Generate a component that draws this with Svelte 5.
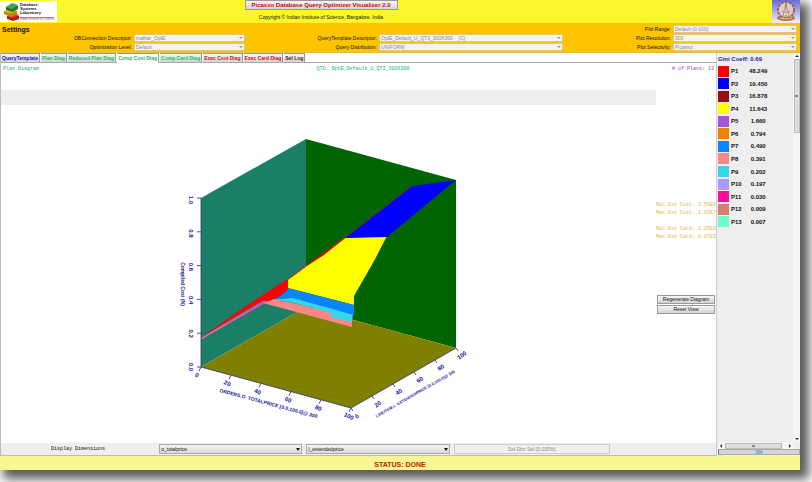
<script lang="ts">
	let activeTab = "Comp Cost Diag"; // The tab whose diagram is shown

	const tabs = [
		{ name: "QueryTemplate", kind: "query" },
		{ name: "Plan Diag", kind: "compile" },
		{ name: "Reduced Plan Diag", kind: "compile" },
		{ name: "Comp Cost Diag", kind: "compile" },
		{ name: "Comp Card Diag", kind: "compile" },
		{ name: "Exec Cost Diag", kind: "exec" },
		{ name: "Exec Card Diag", kind: "exec" },
		{ name: "Sel Log", kind: "log" },
	];

	// Each plan with its colour and the share of the space it covers
	const plans = [
		{ color: "#ff0000", share: "48.249" },
		{ color: "#0000ff", share: "19.450" },
		{ color: "#941010", share: "16.878" },
		{ color: "#ffff00", share: "11.643" },
		{ color: "#a454d8", share: "1.660" },
		{ color: "#e88400", share: "0.794" },
		{ color: "#0a84ff", share: "0.490" },
		{ color: "#f88888", share: "0.391" },
		{ color: "#34d6ea", share: "0.202" },
		{ color: "#a898ff", share: "0.197" },
		{ color: "#ff0c98", share: "0.030" },
		{ color: "#d87c70", share: "0.009" },
		{ color: "#70fad0", share: "0.007" },
	];

	// The settings drop-downs, placed by class in the settings grid
	const settings = [
		{ id: "range", label: "Plot Range:", value: "Default (0-100)" },
		{ id: "connection", label: "DBConnection Descriptor:", value: "malhar_OptE" },
		{ id: "template", label: "QueryTemplate Descriptor:", value: "OptE_Default_U_QT3_300X300\u00a0\u00a0\u00a0\u00a0(C)" },
		{ id: "resolution", label: "Plot Resolution:", value: "300" },
		{ id: "level", label: "Optimization Level:", value: "Default" },
		{ id: "distribution", label: "Query Distribution:", value: "UNIFORM" },
		{ id: "selectivity", label: "Plot Selectivity:", value: "Picasso" },
	];

	const dimensions = ["o_totalprice", "l_extendedprice"];

	const costTicks = ["1.0", "0.8", "0.6", "0.4", "0.2", "0.0"];
	const selTicks = [0, 20, 40, 60, 80, 100];
</script>

<div class="window">
	<header>
		<div class="lab">
			<svg viewBox="0 0 15 18" aria-hidden="true">
				<path d="M3 13l6-2 6 2v3l-6 2-6-2z" fill="#b81c10" />
				<path d="M3 13l6-3 6 2-6 3z" fill="#e03828" />
				<path d="M0 8l7-2 6 2v3l-6 3-7-3z" fill="#b88c10" />
				<path d="M0 8l7-3 6 2-6 3z" fill="#f4cc30" />
				<path d="M2 4l7-3 5 2v3l-6 3-6-2z" fill="#207828" />
				<path d="M2 4l6-4 6 2-6 4z" fill="#44a848" />
			</svg>
			<div class="lab-name">
				<b>Database<br />Systems<br />Laboratory</b>
				<small>Indian Institute of Science</small>
			</div>
		</div>
		<div class="title">
			<button class="about">Picasso Database Query Optimizer Visualizer 2.0</button>
			<p>Copyright © Indian Institute of Science, Bangalore, India</p>
		</div>
		<svg class="crest" viewBox="0 0 28 23" aria-hidden="true">
			<defs>
				<linearGradient id="sky" x1="0" y1="0" x2="0" y2="1">
					<stop offset="0" stop-color="#6868d8" />
					<stop offset="1" stop-color="#f4f0ff" />
				</linearGradient>
			</defs>
			<rect width="28" height="23" fill="url(#sky)" />
			<circle cx="14" cy="10" r="8" fill="#d8cce0" stroke="#a06838" stroke-width="2" stroke-dasharray="3 1" />
			<path d="M11 16l2-8 1-5 1 5 2 8z" fill="#fff4dc" stroke="#a87850" stroke-width=".7" />
			<path d="M10 11l3 2M18 11l-3 2M14 4v12" stroke="#885838" stroke-width=".7" />
			<path d="M6 16q8 4 16 0l1 3q-9 4-18 0z" fill="#a87040" />
			<path d="M8 18q6 2 12 0" fill="none" stroke="#f0d8a0" stroke-width=".8" />
		</svg>
	</header>

	<section class="settings">
		<h2>Settings</h2>
		{#each settings as s}
			<label class={s.id} for={s.id}>{s.label}</label>
			<span class="drop">
				<select id={s.id} disabled><option>{s.value}</option></select>
				<svg viewBox="0 0 4 3" aria-hidden="true"><path d="M0 0h4l-2 2z" fill="#999" /></svg>
			</span>
		{/each}
	</section>

	<main>
		<div class="work">
			<nav>
				{#each tabs as tab}
					<button class="tab {tab.kind}" class:active={tab.name == activeTab} on:click={() => (activeTab = tab.name)}>{tab.name}</button>
				{/each}
			</nav>

			<div class="caption">
				<span>Plan Diagram</span>
				<span>QTD: OptE_Default_U_QT3_300X300</span>
				<span class="count"># of Plans: 13</span>
			</div>

			<div class="diagram">
				<div class="band"></div>
				<svg class="plot" viewBox="1 105 655 338" role="img" aria-label="Compiled cost diagram">
					<!-- walls and floor -->
					<path d="M201 198L306 139V307L201 367z" fill="#1a7f66" />
					<path d="M306 139L456 180V348L306 307z" fill="#006400" />
					<path d="M201 367L306 307L456 348L351 408z" fill="#808000" />

					<!-- cost surface, one area for each plan -->
					<path d="M201 337L246 306L275 287L288 279L307 265L323 253L345 237L346 239L324 256L306 268L289 281V287L287 291L284 292L282 295L279 296L276 299L272 299L268 302L258 303z" fill="#ff0000" />
					<path d="M201 337.500L264 300L268 302L201 339.500z" fill="#a454a8" />
					<path d="M201 338.500L262 303L275 299L310 307L331 312V317L352 321V327L263 303L201 339.500z" fill="#f88888" />
					<path d="M288 280L307 266L324 255L345 238L387 236L374 261L354 296V305L288 288z" fill="#ffff00" />
					<path d="M345 238L412 186L456 180L387 237z" fill="#0000ff" />
					<path d="M307 265L323 254L345 238L412 186" fill="none" stroke="#a81010" stroke-width=".8" />
					<path d="M275 299L291 297L353 314L352 322L331 317V313L310 307L290 302z" fill="#34d6ea" />
					<path d="M288 288L354 305V315L293 298L283 299L275 299L281 296L284 293L287 292z" fill="#0a84ff" />

					<!-- axes -->
					<path d="M201 198V367L351 408L456 348" fill="none" stroke="#303068" stroke-width=".8" />
					{#each costTicks as tick, i}
						<path class="tick" d="M197 {198 + i * 33.8}h4" />
						<text class="num" transform="translate(189 {200 + i * 33.4}) rotate(90)">{tick}</text>
					{/each}
					{#each selTicks as tick, i}
						<path class="tick" d="M{201 + i * 30} {367 + i * 8.2}l-2 4" />
						<text class="num" transform="translate({196 + i * 30.4} {377 + i * 8.2}) rotate(25)">{tick}</text>
						<path class="tick" d="M{351 + i * 21} {408 - i * 12}l2 3" />
						<text class="num" transform="translate({358 + i * 21} {418 - i * 12.2}) rotate(-35)">{tick}</text>
					{/each}
					<text class="axis" transform="translate(181 284) rotate(90)">Compiled Cost (N)</text>
					<text class="axis" transform="translate(268 405) rotate(15)">ORDERS.O_TOTALPRICE [0.0,100.0]@ 300</text>
					<text class="axis small" transform="translate(416 395) rotate(-30)">LINEITEM.L_EXTENDEDPRICE [0.0,100.0]@ 300</text>
				</svg>
				<aside>
					<p>Min Est Cost: 3.59E6<br />Max Est Cost: 1.63E7</p>
					<p>Min Est Card: 2.25E0<br />Max Est Card: 8.07E5</p>
					<div class="actions">
						<button>Regenerate Diagram</button>
						<button>Reset View</button>
					</div>
				</aside>
			</div>

			<div class="dimensions">
				<span class="dim-label" id="dims">Display Dimensions</span>
				{#each dimensions as dim}
					<span class="drop">
						<select aria-labelledby="dims"><option>{dim}</option></select>
						<svg viewBox="0 0 4 3" aria-hidden="true"><path d="M0 0h4l-2 3z" fill="#111" /></svg>
					</span>
				{/each}
				<button disabled>Set Dim Sel [0-100%]</button>
			</div>
		</div>

		<div class="legend">
			<div class="list">
				<h3>Gini Coeff: 0.69</h3>
				<table>
					<tbody>
						{#each plans as plan, i}
							<tr>
								<td><i style="background: {plan.color}"></i></td>
								<th scope="row">P{i + 1}</th>
								<td class="share">{plan.share}</td>
							</tr>
						{/each}
					</tbody>
				</table>
			</div>
			<div class="vbar">
				<svg viewBox="0 0 4 4"><path d="M0 3h4l-2-2z" /></svg>
				<span class="thumb"><i></i></span>
				<svg class="end" viewBox="0 0 4 4"><path d="M0 1h4l-2 2z" /></svg>
			</div>
			<div class="hbar">
				<svg viewBox="0 0 4 4"><path d="M3 0v4l-2-2z" /></svg>
				<span class="thumb"><i></i></span>
				<svg viewBox="0 0 4 4"><path d="M1 0v4l2-2z" /></svg>
			</div>
			<div class="progress">
				<progress id="done" max="100" value="0"></progress>
				<label for="done">0%</label>
			</div>
		</div>
	</main>

	<footer>STATUS: DONE</footer>
</div>

<style>
	:global(body) {
		background: #fff;
		overflow: hidden;
	}

	.window {
		box-sizing: border-box;
		display: flex;
		flex-direction: column;
		min-height: calc(100vh - 12px);
		margin: 0 12px 12px 0;
		background: #fff;
		box-shadow: 6px 6px 10px 3px rgba(0, 0, 0, 0.65);
		font: 5px/8px "Liberation Sans", Arial, sans-serif;
		color: #111;
	}

	h2, h3, p {
		margin: 0;
	}

	button, select {
		box-sizing: border-box;
		margin: 0;
		padding: 0;
		border: 1px solid #999;
		border-radius: 0;
		font: inherit;
		color: inherit;
		white-space: nowrap;
	}

	button {
		background: linear-gradient(#f6f6f6, #d4d4d4);
	}

	header {
		display: grid;
		grid-template-columns: 57px 528fr 187fr 28px;
		height: 23px;
		background: #fcf62a;
	}

	.lab {
		display: flex;
		gap: 1px;
		height: 21px;
		margin-top: 1px;
		padding-left: 4px;
		background: #fff;
		overflow: hidden;
	}

	.lab svg {
		width: 15px;
		height: 18px;
		margin-top: 2px;
	}

	.lab-name {
		font-size: 4px;
		line-height: 4px;
		padding-top: 2px;
		white-space: nowrap;
	}

	.lab-name small {
		display: block;
		margin-top: 2px;
		border-top: 1px solid #b08060;
		font-size: 3px;
		line-height: 3px;
		color: #b05030;
	}

	.title {
		display: flex;
		flex-direction: column;
		align-items: center;
		gap: 3px;
	}

	.about {
		width: 153px;
		height: 10px;
		font-size: 6px;
		font-weight: bold;
		color: #c80820;
	}

	.crest {
		grid-column: 4;
		width: 28px;
		height: 23px;
	}

	.settings {
		display: grid;
		grid-template-columns: 130fr 111fr 130fr 184fr 106fr 124fr;
		grid-auto-rows: 9px;
		column-gap: 2px;
		padding: 2px 3px 0 2px;
		background: #ffc400;
		border-bottom: 1px solid #e0c040;
	}

	.settings h2 {
		font-size: 7px;
		line-height: 9px;
	}

	.settings label {
		text-align: right;
		line-height: 9px;
	}

	.settings .range,
	.settings .resolution,
	.settings .selectivity {
		grid-column: 5;
	}

	.drop {
		display: grid;
		min-width: 0;
		height: 8px;
	}

	.drop select, .drop svg {
		grid-area: 1 / 1;
	}

	.drop select {
		appearance: none;
		width: 100%;
		height: 100%;
		padding-left: 1px;
		background: #f4f4f2;
		border-color: #dcc878;
		line-height: 6px;
	}

	.drop select:disabled {
		color: #888;
		opacity: 1;
	}

	.drop svg {
		justify-self: end;
		align-self: center;
		width: 4px;
		height: 3px;
		margin-right: 2px;
		pointer-events: none;
	}

	main {
		flex: 1;
		display: grid;
		grid-template-columns: 1fr 84px;
	}

	.work {
		display: flex;
		flex-direction: column;
		min-width: 0;
		border-left: 1px solid #bbb;
		border-bottom: 1px solid #bbb;
	}

	nav {
		display: flex;
		gap: 1px;
		align-items: flex-end;
		height: 9px;
		border-bottom: 1px solid #aaa;
	}

	.tab {
		height: 9px;
		padding: 0 1px;
		border-width: 1px 1px 0 0;
		font-weight: bold;
		line-height: 8px;
	}

	.tab.query {
		color: #1818a8;
	}

	.tab.compile {
		color: #20b860;
	}

	.tab.exec {
		color: #c81020;
	}

	.tab.log {
		color: #501018;
	}

	.tab.active {
		height: 10px;
		margin-bottom: -1px;
		padding-bottom: 2px;
		background: #fff;
	}

	.caption {
		display: grid;
		grid-template-columns: 313fr 200fr 197fr;
		padding: 2px 2px 0;
		height: 25px;
		font-family: "Liberation Mono", monospace;
		color: #10b860;
	}

	.caption .count {
		text-align: right;
		color: #c030c8;
	}

	.diagram {
		flex: 1;
		display: grid;
		grid-template-columns: 655fr 60fr;
		grid-template-rows: 15px 1fr;
	}

	.band {
		background: #eee;
	}

	.plot {
		grid-row: 2;
		width: 100%;
		height: 100%;
	}

	.plot text {
		text-anchor: middle;
		font-weight: bold;
		fill: #1414a0;
	}

	.num {
		font-size: 6px;
	}

	.axis {
		font-size: 5px;
	}

	.axis.small {
		font-size: 4px;
	}

	.tick {
		stroke: #4848a0;
		stroke-width: 1;
	}

	aside {
		grid-row: 2;
		grid-column: 2;
		min-width: 0;
		padding-top: 96px;
		overflow: hidden;
	}

	aside p {
		margin-bottom: 8px;
		font-family: "Liberation Mono", monospace;
		color: #e0b840;
		white-space: nowrap;
	}

	.actions {
		display: grid;
		gap: 1px;
		margin-top: 54px;
		padding: 0 1px;
	}

	.actions button {
		height: 9px;
		line-height: 7px;
	}

	.dimensions {
		display: grid;
		grid-template-columns: 154fr 143fr 143fr 156fr 102fr;
		column-gap: 4px;
		align-items: center;
		height: 12px;
		background: #eee;
	}

	.dim-label {
		text-align: center;
		font-family: "Liberation Mono", monospace;
	}

	.dimensions .drop {
		height: 10px;
	}

	.dimensions select {
		background: linear-gradient(#f4f4f4, #dadada);
		border-color: #aaa;
	}

	.dimensions button {
		height: 10px;
		background: #f0f0f0;
		border-color: #ccc;
		color: #888;
	}

	.legend {
		display: grid;
		grid-template-columns: 1fr 7px;
		grid-template-rows: 1fr 7px 7px;
		padding-left: 1px;
		border-left: 1px solid #ccc;
		background: #eee;
	}

	h3 {
		padding-top: 2px;
		font-size: 6px;
		color: #1818b0;
	}

	table {
		height: 163px;
		margin-top: 2px;
		border-collapse: collapse;
		font-size: 6px;
		font-weight: bold;
	}

	td, th {
		padding: 0;
		text-align: left;
		line-height: 8px;
	}

	td i {
		display: block;
		width: 11px;
		height: 11px;
	}

	th {
		width: 18px;
		padding-left: 2px;
	}

	.share {
		text-align: center;
	}

	.vbar, .hbar {
		display: flex;
		align-items: center;
		background: #f6f6f6;
	}

	.vbar {
		flex-direction: column;
	}

	.vbar svg, .hbar svg {
		width: 4px;
		height: 4px;
		margin: 1px;
		fill: #333;
	}

	.vbar .end {
		margin-top: auto;
	}

	.thumb {
		display: flex;
		align-items: center;
		justify-content: center;
		box-sizing: border-box;
		border: 1px solid #bbb;
		background: #ddd;
	}

	.vbar .thumb {
		width: 6px;
		height: 74px;
	}

	.hbar .thumb {
		flex: 1;
		height: 6px;
		margin: 0 5px 0 1px;
	}

	.thumb i {
		width: 3px;
		height: 2px;
		background: #888;
	}

	.hbar {
		grid-column: 1;
	}

	.progress {
		grid-column: 1 / 3;
		display: grid;
	}

	.progress progress, .progress label {
		grid-area: 1 / 1;
	}

	progress {
		appearance: none;
		box-sizing: border-box;
		width: 100%;
		height: 6px;
		border: 1px solid #aaa;
		border-left-color: #2890e0;
	}

	progress::-webkit-progress-bar {
		background: #d4d4d4;
	}

	.progress label {
		z-index: 1;
		text-align: center;
		line-height: 6px;
		color: #1878c0;
	}

	footer {
		height: 14px;
		padding-top: 1px;
		box-sizing: border-box;
		background: #f9f694;
		text-align: center;
		font-size: 7px;
		font-weight: bold;
		line-height: 16px;
		color: #c02008;
	}
</style>
